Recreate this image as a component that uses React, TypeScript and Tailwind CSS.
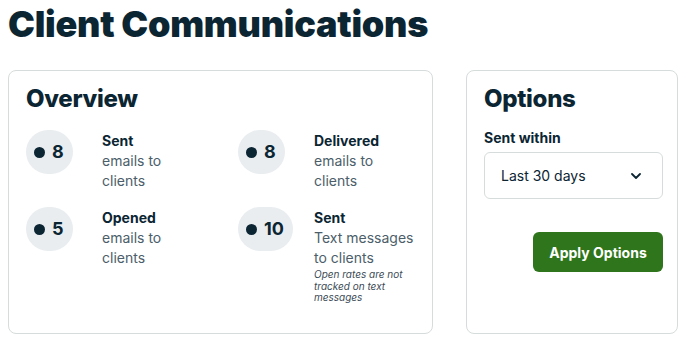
import React from "react";

const stats = [
  { n: "8", label: "Sent", desc: "emails to clients" },
  { n: "8", label: "Delivered", desc: "emails to clients" },
  { n: "5", label: "Opened", desc: "emails to clients" },
  { n: "10", label: "Sent", desc: "Text messages to clients", note: "Open rates are not tracked on text messages" },
];

function Stat({ n, label, desc, note }: { n: string; label: string; desc: string; note?: string }) {
  return (
    <div className="flex items-start">
      <div className="w-[76px] shrink-0">
        <div className="inline-flex h-[44px] items-center gap-[7px] rounded-full bg-[#e9edf0] pl-[8px] pr-[9px]">
          <span className="block h-[11px] w-[11px] rounded-full bg-[#0b2533]" />
          <span className="text-[18px] font-bold leading-none text-[#0b2533]">{n}</span>
        </div>
      </div>
      <div className="w-[104px] pt-px">
        <div className="text-[14px] font-bold leading-5 text-[#0b2533]">{label}</div>
        <div className="text-[14px] leading-5 text-[#4b5e6a]">{desc}</div>
        {note && <div className="mt-[1px] text-[10px] italic leading-[11.5px] text-[#3b4a55]">{note}</div>}
      </div>
    </div>
  );
}

export default function App() {
  return (
    <div className="min-h-[347px] w-[691px] bg-white px-2 font-['Inter',sans-serif] text-[#0b2533]">
      <h1 className="pt-[2px] text-[36px] font-black leading-[44px] tracking-[-0.25px]">Client Communications</h1>
      <div className="mt-[24px] flex gap-[33px]">
        <div className="h-[264px] w-[425px] rounded-lg border border-[#d6dcdc] px-[17px] pt-[12px]">
          <h2 className="text-[24px] font-extrabold leading-8 tracking-[-0.3px]">Overview</h2>
          <div className="mt-[15px] grid grid-cols-[212px_1fr] gap-y-[16px]">
            {stats.map((s, i) => (
              <Stat key={i} {...s} />
            ))}
          </div>
        </div>
        <div className="h-[264px] w-[212px] rounded-lg border border-[#d6dcdc] pl-[17px] pt-[12px]">
          <h2 className="text-[24px] font-extrabold leading-8 tracking-[-0.3px]">Options</h2>
          <div className="mt-[13px] text-[14px] font-bold leading-5">Sent within</div>
          <div className="mt-1 flex h-[47px] w-[179px] items-center justify-between rounded-md border border-[#d6dcdc] pl-[16px] pr-[21px]">
            <span className="text-[14px] text-[#0b2533]">Last 30 days</span>
            <svg width="10" height="6" viewBox="0 0 10 6" fill="none">
              <path d="M1 1l4 4 4-4" stroke="#0b2533" strokeWidth="1.8" strokeLinecap="round" strokeLinejoin="round" />
            </svg>
          </div>
          <div className="mt-[33px] flex w-[179px] justify-end">
            <button className="h-[40px] w-[130px] rounded-md bg-[#2e751b] text-[14px] font-bold text-white">Apply Options</button>
          </div>
        </div>
      </div>
    </div>
  );
}
